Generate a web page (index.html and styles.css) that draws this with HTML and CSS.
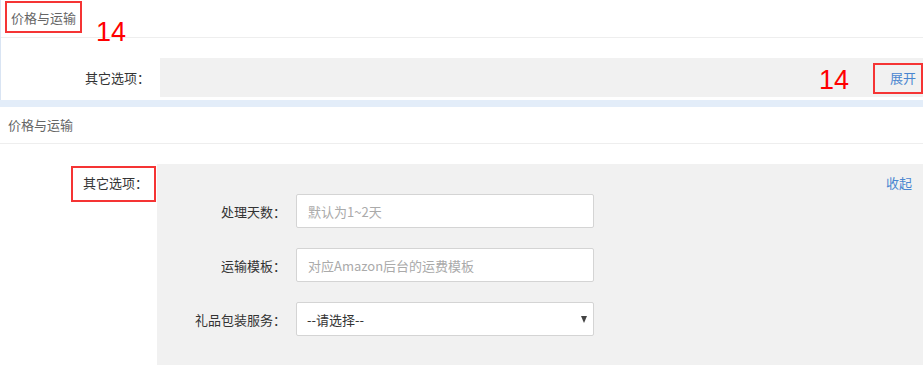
FILE: index.html
```html
<!DOCTYPE html>
<html lang="zh">
<head>
<meta charset="utf-8">
<link rel="stylesheet" href="styles.css">
</head>
<body>
<div class="page">
  <section class="card card-first">
    <div class="card-head head-first">价格与运输</div>
    <div class="row-collapsed">
      <div class="row-label">其它选项：</div>
      <div class="collapsed-panel"><a class="toggle-link">展开</a></div>
    </div>
  </section>
  <div class="band"></div>
  <section class="card card-second">
    <div class="card-head head-second">价格与运输</div>
    <div class="row-expanded">
      <div class="row-label label-expanded">其它选项：</div>
      <div class="expanded-panel">
        <div class="form-grid">
          <label class="field-label">处理天数：</label>
          <input class="field-input" type="text" placeholder="默认为1~2天">
          <label class="field-label">运输模板：</label>
          <input class="field-input" type="text" placeholder="对应Amazon后台的运费模板">
          <label class="field-label">礼品包装服务：</label>
          <div class="select-wrap">
            <select class="field-select"><option>--请选择--</option></select>
            <span class="select-arrow"></span>
          </div>
        </div>
        <a class="toggle-link collapse-link">收起</a>
      </div>
    </div>
  </section>

  <div class="mark mark-1"></div>
  <div class="mark mark-2"></div>
  <div class="mark mark-3"></div>
  <div class="note note-1">14</div>
  <div class="note note-2">14</div>
</div>
</body>
</html>
```

FILE: styles.css
```css
* { box-sizing: border-box; }
html, body { margin: 0; padding: 0; background: #fff; }
body {
  font-family: "Noto Sans CJK SC", "Microsoft YaHei", sans-serif;
  font-size: 13px;
  color: #333;
  width: 923px;
  height: 366px;
  overflow: hidden;
}
.page { position: relative; }

.card { background: #fff; }
.card-first { border-left: 1px solid #d9e4f3; }

.card-head {
  color: #666;
  font-size: 13px;
  border-bottom: 1px solid #eeeeee;
}
.head-first { height: 38px; line-height: 35px; padding-left: 10px; }
.head-second { height: 37px; line-height: 36px; padding-left: 8px; }

.row-collapsed {
  display: flex;
  padding: 20px 0 3px 0;
}
.row-label {
  color: #333;
  text-align: right;
  line-height: 39px;
  white-space: nowrap;
}
.row-collapsed .row-label { width: 159px; padding-right: 10px; }
.collapsed-panel {
  flex: 1;
  height: 39px;
  background: #f1f1f1;
  display: flex;
  justify-content: flex-end;
  align-items: center;
  padding-right: 7px;
}
.toggle-link { color: #4a86d0; font-size: 13px; cursor: pointer; }

.band { height: 7px; background: #e3edf9; }

.row-expanded { display: flex; padding-top: 20px; }
.label-expanded { width: 157px; padding-right: 9px; line-height: 20px; padding-top: 9px; }
.expanded-panel {
  flex: 1;
  height: 201px;
  background: #f1f1f1;
  display: flex;
  align-items: flex-start;
}
.form-grid {
  display: grid;
  grid-template-columns: 129px 298px;
  column-gap: 10px;
  row-gap: 20px;
  padding-top: 30px;
  align-items: center;
}
.field-label { text-align: right; color: #333; white-space: nowrap; }
.field-input, .field-select {
  width: 298px;
  height: 34px;
  border: 1px solid #d4d4d4;
  border-radius: 2px;
  background: #fff;
  font-family: inherit;
  font-size: 13px;
  padding: 0 11px;
  color: #333;
  outline: none;
}
.field-input::placeholder { color: #aaa; }
.select-wrap { position: relative; width: 298px; height: 34px; }
.field-select { appearance: none; -webkit-appearance: none; padding-left: 10px; }
.select-arrow {
  position: absolute;
  right: 7px;
  top: 14px;
  width: 0;
  height: 0;
  border-left: 3.5px solid transparent;
  border-right: 3.5px solid transparent;
  border-top: 7px solid #444;
  pointer-events: none;
}
.collapse-link { margin-left: auto; padding-top: 9px; padding-right: 11px; line-height: 20px; }

.mark { position: absolute; border: 2px solid #f53434; }
.mark-1 { left: 5px; top: 1px; width: 77px; height: 32px; }
.mark-2 { left: 873px; top: 63px; width: 50px; height: 31px; }
.mark-3 { left: 71px; top: 166px; width: 85px; height: 36px; }

.note {
  position: absolute;
  color: #ff0000;
  font-family: "Liberation Sans", Arial, sans-serif;
  font-size: 27px;
  line-height: 1;
}
.note-1 { left: 96px; top: 19px; }
.note-2 { left: 819px; top: 67px; }
```
